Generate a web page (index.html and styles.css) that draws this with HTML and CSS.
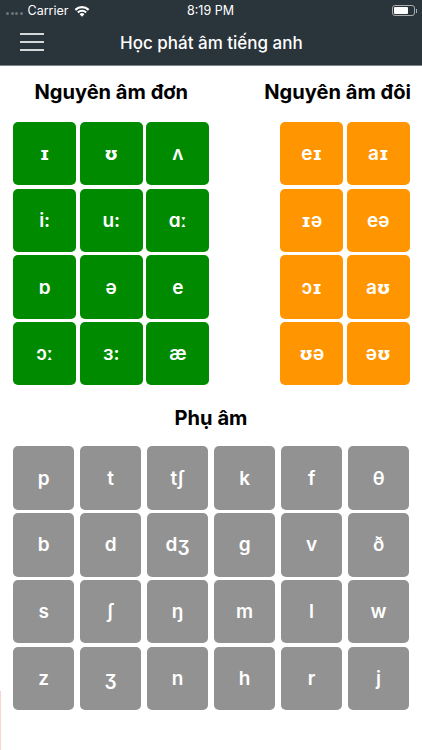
FILE: index.html
```html
<!DOCTYPE html>
<html lang="en">

<head>
    <meta charset="UTF-8" />
    <meta name="viewport" content="width=device-width, initial-scale=1.0" />
    <title>Học phát âm tiếng anh</title>
    <link rel="stylesheet" href="styles.css">
</head>

<body>
    <div class="header">
        <div class="status-bar">
            <div class="status-left">
                <div class="signal">
                    <span></span><span></span><span></span><span></span>
                </div>
                <span>Carrier</span>
                <svg class="wifi" width="16" height="12" viewBox="0 0 16 12">
                    <path d="M0.6 4.1A10.6 10.6 0 0 1 15.4 4.1L13.9 5.7A8.4 8.4 0 0 0 2.1 5.7Z" fill="#fff" />
                    <path d="M3.1 6.7A7 7 0 0 1 12.9 6.7L11.4 8.2A4.9 4.9 0 0 0 4.6 8.2Z" fill="#fff" />
                    <path d="M5.6 9.2A3.4 3.4 0 0 1 10.4 9.2L8 11.7Z" fill="#fff" />
                </svg>
            </div>
            <div class="status-time">8:19 PM</div>
            <div class="status-right">
                <div class="battery">
                    <div class="battery-level"></div>
                </div>
                <div class="battery-cap"></div>
            </div>
        </div>
        <div class="nav-bar">
            <div class="menu-icon">
                <span></span><span></span><span></span>
            </div>
            <div class="nav-title">Học phát âm tiếng anh</div>
        </div>
    </div>

    <div class="vowels">
        <div class="vowel-group">
            <h2 class="group-title">Nguyên âm đơn</h2>
            <div class="tiles cols-3">
                <div class="tile green"><span class="ipa">ɪ</span></div>
                <div class="tile green"><span class="ipa">ʊ</span></div>
                <div class="tile green">ʌ</div>
                <div class="tile green">i:</div>
                <div class="tile green">u:</div>
                <div class="tile green">ɑ<span class="ipa">ː</span></div>
                <div class="tile green">ɒ</div>
                <div class="tile green">ə</div>
                <div class="tile green">e</div>
                <div class="tile green">ɔ<span class="ipa">ː</span></div>
                <div class="tile green">ɜ:</div>
                <div class="tile green">æ</div>
            </div>
        </div>
        <div class="vowel-group">
            <h2 class="group-title">Nguyên âm đôi</h2>
            <div class="tiles cols-2">
                <div class="tile orange">e<span class="ipa">ɪ</span></div>
                <div class="tile orange">a<span class="ipa">ɪ</span></div>
                <div class="tile orange"><span class="ipa">ɪ</span>ə</div>
                <div class="tile orange">eə</div>
                <div class="tile orange">ɔ<span class="ipa">ɪ</span></div>
                <div class="tile orange">a<span class="ipa">ʊ</span></div>
                <div class="tile orange"><span class="ipa">ʊ</span>ə</div>
                <div class="tile orange">ə<span class="ipa">ʊ</span></div>
            </div>
        </div>
    </div>

    <div class="consonants">
        <h2 class="group-title">Phụ âm</h2>
        <div class="tiles cols-6">
            <div class="tile gray">p</div>
            <div class="tile gray">t</div>
            <div class="tile gray">tʃ</div>
            <div class="tile gray">k</div>
            <div class="tile gray">f</div>
            <div class="tile gray">θ</div>
            <div class="tile gray">b</div>
            <div class="tile gray">d</div>
            <div class="tile gray">dʒ</div>
            <div class="tile gray">g</div>
            <div class="tile gray">v</div>
            <div class="tile gray">ð</div>
            <div class="tile gray">s</div>
            <div class="tile gray">ʃ</div>
            <div class="tile gray">ŋ</div>
            <div class="tile gray">m</div>
            <div class="tile gray">l</div>
            <div class="tile gray">w</div>
            <div class="tile gray">z</div>
            <div class="tile gray">ʒ</div>
            <div class="tile gray">n</div>
            <div class="tile gray">h</div>
            <div class="tile gray">r</div>
            <div class="tile gray">j</div>
        </div>
    </div>

    <div class="edge-mark"></div>
</body>

</html>
```

FILE: styles.css
```css
* {
    box-sizing: border-box;
}

body {
    margin: 0;
    height: 750px;
    overflow: hidden;
    position: relative;
    background-color: white;
    font-family: Inter, "Noto Sans", "DejaVu Sans", sans-serif;
}

.header {
    height: 66px;
    background-color: #2a343b;
    border-bottom: 1px solid #7d8488;
    color: white;
}

.status-bar {
    height: 21px;
    padding: 0 5px 0 6px;
    display: flex;
    justify-content: space-between;
    align-items: center;
    font-size: 12.5px;
    position: relative;
}

.status-left {
    display: flex;
    align-items: center;
    gap: 5px;
}

.signal {
    display: flex;
    gap: 1.5px;
    margin-top: 5px;
}

.signal span {
    width: 3px;
    height: 3px;
    border-radius: 50%;
    background-color: #6f767b;
}

.wifi {
    margin-left: 1px;
}

.status-time {
    position: absolute;
    left: 187px;
    top: 3px;
}

.status-right {
    display: flex;
    align-items: center;
    gap: 1px;
}

.battery {
    width: 23px;
    height: 11px;
    border: 1px solid #a9adb0;
    border-radius: 3px;
    padding: 1px;
}

.battery-level {
    width: 14px;
    height: 100%;
    background-color: white;
    border-radius: 1px;
}

.battery-cap {
    width: 1px;
    height: 4px;
    background-color: #a9adb0;
}

.nav-bar {
    height: 44px;
    padding-left: 20px;
    display: flex;
    align-items: center;
}

.menu-icon {
    width: 24px;
    display: flex;
    flex-direction: column;
    gap: 6px;
    margin-top: -3px;
}

.menu-icon span {
    height: 2px;
    background-color: #d5d7d9;
}

.nav-title {
    margin-left: 76px;
    margin-top: -1px;
    font-size: 17px;
    font-weight: 500;
}

.vowels {
    display: flex;
    justify-content: space-between;
    padding: 0 12px 0 13px;
}

.group-title {
    margin: 0;
    height: 56px;
    padding-top: 14px;
    font-size: 20.1px;
    line-height: 24px;
    font-weight: 700;
    color: black;
    text-align: center;
    white-space: nowrap;
}

.vowel-group {
    display: flex;
    flex-direction: column;
}

.vowel-group:last-child {
    align-items: flex-end;
}

.vowel-group:last-child .group-title {
    margin-right: -1px;
}

.tiles {
    display: grid;
    gap: 3.3px;
    grid-auto-rows: 63.4px;
}

.cols-3 {
    grid-template-columns: repeat(3, 63.3px);
}

.cols-2 {
    grid-template-columns: repeat(2, 63.3px);
}

.consonants {
    padding: 0 13px;
    margin-top: 5px;
}

.consonants .group-title {
    padding-top: 16px;
}

.cols-6 {
    grid-template-columns: repeat(6, 61.3px);
    column-gap: 5.7px;
}

.tile {
    display: flex;
    justify-content: center;
    align-items: center;
    border-radius: 5px;
    color: white;
    font-size: 19px;
    font-weight: 600;
}

/* glyphs with serifs, Inter draws these too plain */
.ipa {
    font-family: "DejaVu Sans", sans-serif;
    font-size: 18px;
    font-weight: 700;
}

.green {
    background-color: #008a00;
}

.orange {
    background-color: #ff9500;
}

.gray {
    background-color: #929292;
}

.edge-mark {
    position: absolute;
    left: 0;
    top: 691px;
    width: 1px;
    height: 59px;
    background-color: #f9d5d2;
}
```
